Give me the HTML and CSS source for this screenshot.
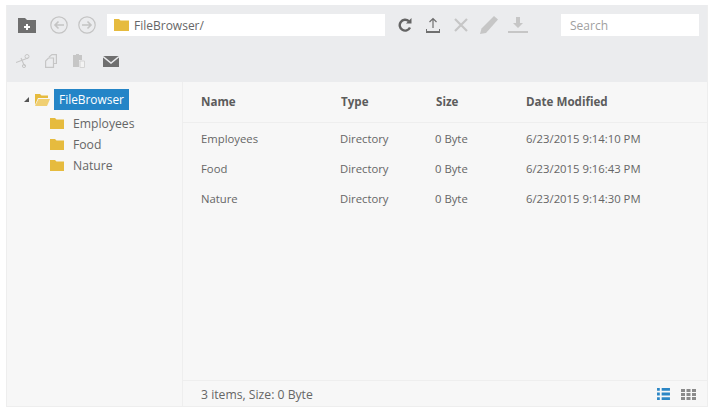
FILE: index.html
```html
<!DOCTYPE html>
<html>
<head lang="en">
    <meta charset="UTF-8">
    <title>FileBrowser</title>
    <link rel="stylesheet" href="styles.css">
</head>
<body>
    <div class="browser">
        <div class="toolbar">
            <div class="tool-row">
                <svg class="ico new-folder" width="18" height="16" viewBox="0 0 18 16"><path fill="#6f6f6f" d="M0 1h7l2 2h9v13H0z"/><path fill="#fff" d="M8 7h2v2h2v2h-2v2H8v-2H6V9h2z"/></svg>
                <svg class="ico back" width="18" height="18" viewBox="0 0 18 18"><circle cx="9" cy="9" r="8.2" fill="none" stroke="#c4c4c4" stroke-width="1.2"/><path fill="none" stroke="#c4c4c4" stroke-width="1.6" d="M14 9H5M8.500 5.500L5 9l3.500 3.500"/></svg>
                <svg class="ico forward" width="18" height="18" viewBox="0 0 18 18"><circle cx="9" cy="9" r="8.2" fill="none" stroke="#c4c4c4" stroke-width="1.2"/><path fill="none" stroke="#c4c4c4" stroke-width="1.6" d="M4 9h9M9.500 5.500L13 9l-3.500 3.500"/></svg>
                <div class="address">
                    <svg width="15" height="12" viewBox="0 0 15 12"><path fill="#e6bb3e" d="M0 0h5l1.500 1.500H15V12H0z"/></svg>
                    <span>FileBrowser/</span>
                </div>
                <svg class="ico refresh" width="14" height="14" viewBox="0 0 14 14"><path fill="none" stroke="#646464" stroke-width="2.400" d="M12 9.500A5.400 5.400 0 1 1 10.800 3.200"/><path fill="#646464" d="M8 5.500h5.500V0z"/></svg>
                <svg class="ico upload" width="14" height="16" viewBox="0 0 14 16"><path fill="none" stroke="#6f6f6f" stroke-width="1.200" d="M7 11V2M3.500 5L7 1.500 10.500 5"/><path fill="#6f6f6f" d="M0 12h1v2h12v-2h1v4H0z"/></svg>
                <svg class="ico remove" width="14" height="14" viewBox="0 0 14 14"><path stroke="#c6c6c6" stroke-width="2.200" d="M1 1l12 12M13 1L1 13"/></svg>
                <svg class="ico rename" width="18" height="18" viewBox="0 0 18 18"><path fill="#c6c6c6" d="M14 0l4 3.500L6 17l-6 1 1.500-5.500z"/></svg>
                <svg class="ico download" width="20" height="16" viewBox="0 0 20 16"><path fill="#c6c6c6" d="M8 0h4v6h3l-5 5-5-5h3zM0 14h20v2H0z"/></svg>
                <div class="search">Search</div>
            </div>
            <div class="tool-row second">
                <svg class="ico cut" width="14" height="14" viewBox="0 0 14 14"><path fill="none" stroke="#c6c6c6" stroke-width="1.100" d="M0 8.500L12 4M5 4l3.500 8"/><circle cx="11" cy="2.500" r="2" fill="none" stroke="#c6c6c6"/><circle cx="8" cy="12" r="1.600" fill="none" stroke="#c6c6c6"/></svg>
                <svg class="ico copy" width="12" height="14" viewBox="0 0 12 14"><path fill="none" stroke="#c6c6c6" stroke-width="1.200" d="M4 3l3-2.400h4.400V9.500H9M3.500 4h5v9.400H.6V7z"/></svg>
                <svg class="ico paste" width="12" height="14" viewBox="0 0 12 14"><path fill="#c6c6c6" d="M0 1h3V0h3v1h3v5H6v7H0z"/><path fill="#f2f2f2" stroke="#d4d4d4" d="M7 7h4.500v6.500H7z"/></svg>
                <svg class="ico mail" width="16" height="11" viewBox="0 0 16 11"><path fill="#6f6f6f" d="M0 0h16v11H0z"/><path fill="none" stroke="#eaebed" stroke-width="1.400" d="M0 .5l8 6.500 8-6.500"/></svg>
            </div>
        </div>
        <div class="panes">
            <div class="tree">
                <div class="tree-root">
                    <span class="arrow"></span>
                    <svg width="15" height="12" viewBox="0 0 15 12"><path fill="#e6bb3e" d="M0 0h5l1.500 1.500H13V4H3L0 11z"/><path fill="#f0cf72" d="M3.500 5H15l-3 7H0z"/></svg>
                    <span class="selected">FileBrowser</span>
                </div>
                <div class="tree-items">
                    <div class="tree-item"><svg width="14" height="11" viewBox="0 0 14 11"><path fill="#e6bb3e" d="M0 0h5l1.500 1.500H14V11H0z"/></svg><span>Employees</span></div>
                    <div class="tree-item"><svg width="14" height="11" viewBox="0 0 14 11"><path fill="#e6bb3e" d="M0 0h5l1.500 1.500H14V11H0z"/></svg><span>Food</span></div>
                    <div class="tree-item"><svg width="14" height="11" viewBox="0 0 14 11"><path fill="#e6bb3e" d="M0 0h5l1.500 1.500H14V11H0z"/></svg><span>Nature</span></div>
                </div>
            </div>
            <div class="main">
                <div class="grid-head">
                    <div class="col-name">Name</div>
                    <div class="col-type">Type</div>
                    <div class="col-size">Size</div>
                    <div class="col-date">Date Modified</div>
                </div>
                <div class="grid-body">
                    <div class="grid-row">
                        <div class="col-name">Employees</div>
                        <div class="col-type">Directory</div>
                        <div class="col-size">0 Byte</div>
                        <div class="col-date">6/23/2015 9:14:10 PM</div>
                    </div>
                    <div class="grid-row">
                        <div class="col-name">Food</div>
                        <div class="col-type">Directory</div>
                        <div class="col-size">0 Byte</div>
                        <div class="col-date">6/23/2015 9:16:43 PM</div>
                    </div>
                    <div class="grid-row">
                        <div class="col-name">Nature</div>
                        <div class="col-type">Directory</div>
                        <div class="col-size">0 Byte</div>
                        <div class="col-date">6/23/2015 9:14:30 PM</div>
                    </div>
                </div>
                <div class="status">
                    <span>3 items, Size: 0 Byte</span>
                    <div class="views">
                        <svg width="13" height="12" viewBox="0 0 14 13"><path fill="#2b86c5" d="M0 0h3v3H0zM5 0h9v3H5zM0 5h3v3H0zM5 5h9v3H5zM0 10h3v3H0zM5 10h9v3H5z"/></svg>
                        <svg width="15" height="11" viewBox="0 0 15 11"><path fill="#8a8a8a" d="M0 0h4v3H0zM5.500 0h4v3h-4zM11 0h4v3h-4zM0 4h4v3H0zM5.500 4h4v3h-4zM11 4h4v3h-4zM0 8h4v3H0zM5.500 8h4v3h-4zM11 8h4v3h-4z"/></svg>
                    </div>
                </div>
            </div>
        </div>
    </div>
</body>
</html>
```

FILE: styles.css
```css
*{
    margin: 0;
    padding: 0;
    box-sizing: border-box;
}
body{
    background: #ffffff;
    font-family: "Open Sans", "Noto Sans", sans-serif;
    font-size: 12px;
    color: #666666;
}
.browser{
    width: 702px;
    height: 402px;
    margin: 5px 0 0 6px;
    border: 1px solid #eeeeee;
    border-top: 0;
    display: flex;
    flex-direction: column;
    background: #f7f7f7;
}
.toolbar{
    height: 77px;
    flex: none;
    background: #ebecee;
    padding-top: 9px;
}
.tool-row{
    display: flex;
    align-items: center;
    height: 22px;
}
.tool-row.second{
    margin-top: 14px;
}
.new-folder{ margin-left: 11px; }
.back{ margin-left: 14px; }
.forward{ margin-left: 10px; }
.refresh{ margin-left: 13px; }
.upload{ margin-left: 14px; }
.remove{ margin-left: 14px; }
.rename{ margin-left: 12px; }
.download{ margin-left: 10px; }
.cut{ margin-left: 9px; }
.copy{ margin-left: 15px; }
.paste{ margin-left: 16px; }
.mail{ margin-left: 18px; }
.address{
    width: 278px;
    height: 22px;
    margin-left: 11px;
    background: #ffffff;
    display: flex;
    align-items: center;
    gap: 5px;
    padding-left: 7px;
}
.search{
    width: 138px;
    height: 22px;
    margin-left: 33px;
    background: #ffffff;
    color: #a0a0a0;
    line-height: 23px;
    padding-left: 9px;
}
.panes{
    flex: 1;
    display: flex;
    min-height: 0;
}
.tree{
    width: 176px;
    flex: none;
    border-right: 1px solid #eeeeee;
    padding-top: 7px;
}
.tree-root{
    display: flex;
    align-items: center;
    height: 21px;
    padding-left: 17px;
}
.arrow{
    width: 0;
    height: 0;
    border-left: 5px solid transparent;
    border-bottom: 5px solid #555555;
    margin-right: 6px;
}
.selected{
    margin-left: 4px;
    height: 21px;
    line-height: 21px;
    padding: 0 5px;
    background: #2485c7;
    color: #ffffff;
    font-size: 11.9px;
}
.tree-items{
    padding-top: 3px;
    font-size: 12.2px;
}
.tree-item{
    display: flex;
    align-items: center;
    height: 21px;
    padding-left: 43px;
    gap: 9px;
}
.main{
    flex: 1;
    display: flex;
    flex-direction: column;
    min-width: 0;
}
.grid-head{
    display: flex;
    height: 41px;
    align-items: center;
    padding: 0 0 2px 18px;
    border-bottom: 1px solid #eeeeee;
    font-weight: 700;
    font-size: 11.6px;
    color: #5c5c5c;
}
.grid-head .col-name{ width: 140px; }
.grid-head .col-size{ width: 90px; }
.grid-body{
    flex: 1;
    font-size: 11.3px;
}
.grid-row{
    display: flex;
    height: 30px;
    align-items: center;
    padding-left: 18px;
}
.col-name{ width: 139px; }
.col-type{ width: 95px; }
.col-size{ width: 91px; }
.status{
    height: 26px;
    flex: none;
    border-top: 1px solid #eeeeee;
    display: flex;
    align-items: center;
    justify-content: space-between;
    padding: 1px 11px 0 18px;
    font-size: 12.2px;
}
.views{
    display: flex;
    align-items: center;
    gap: 11px;
}
```
